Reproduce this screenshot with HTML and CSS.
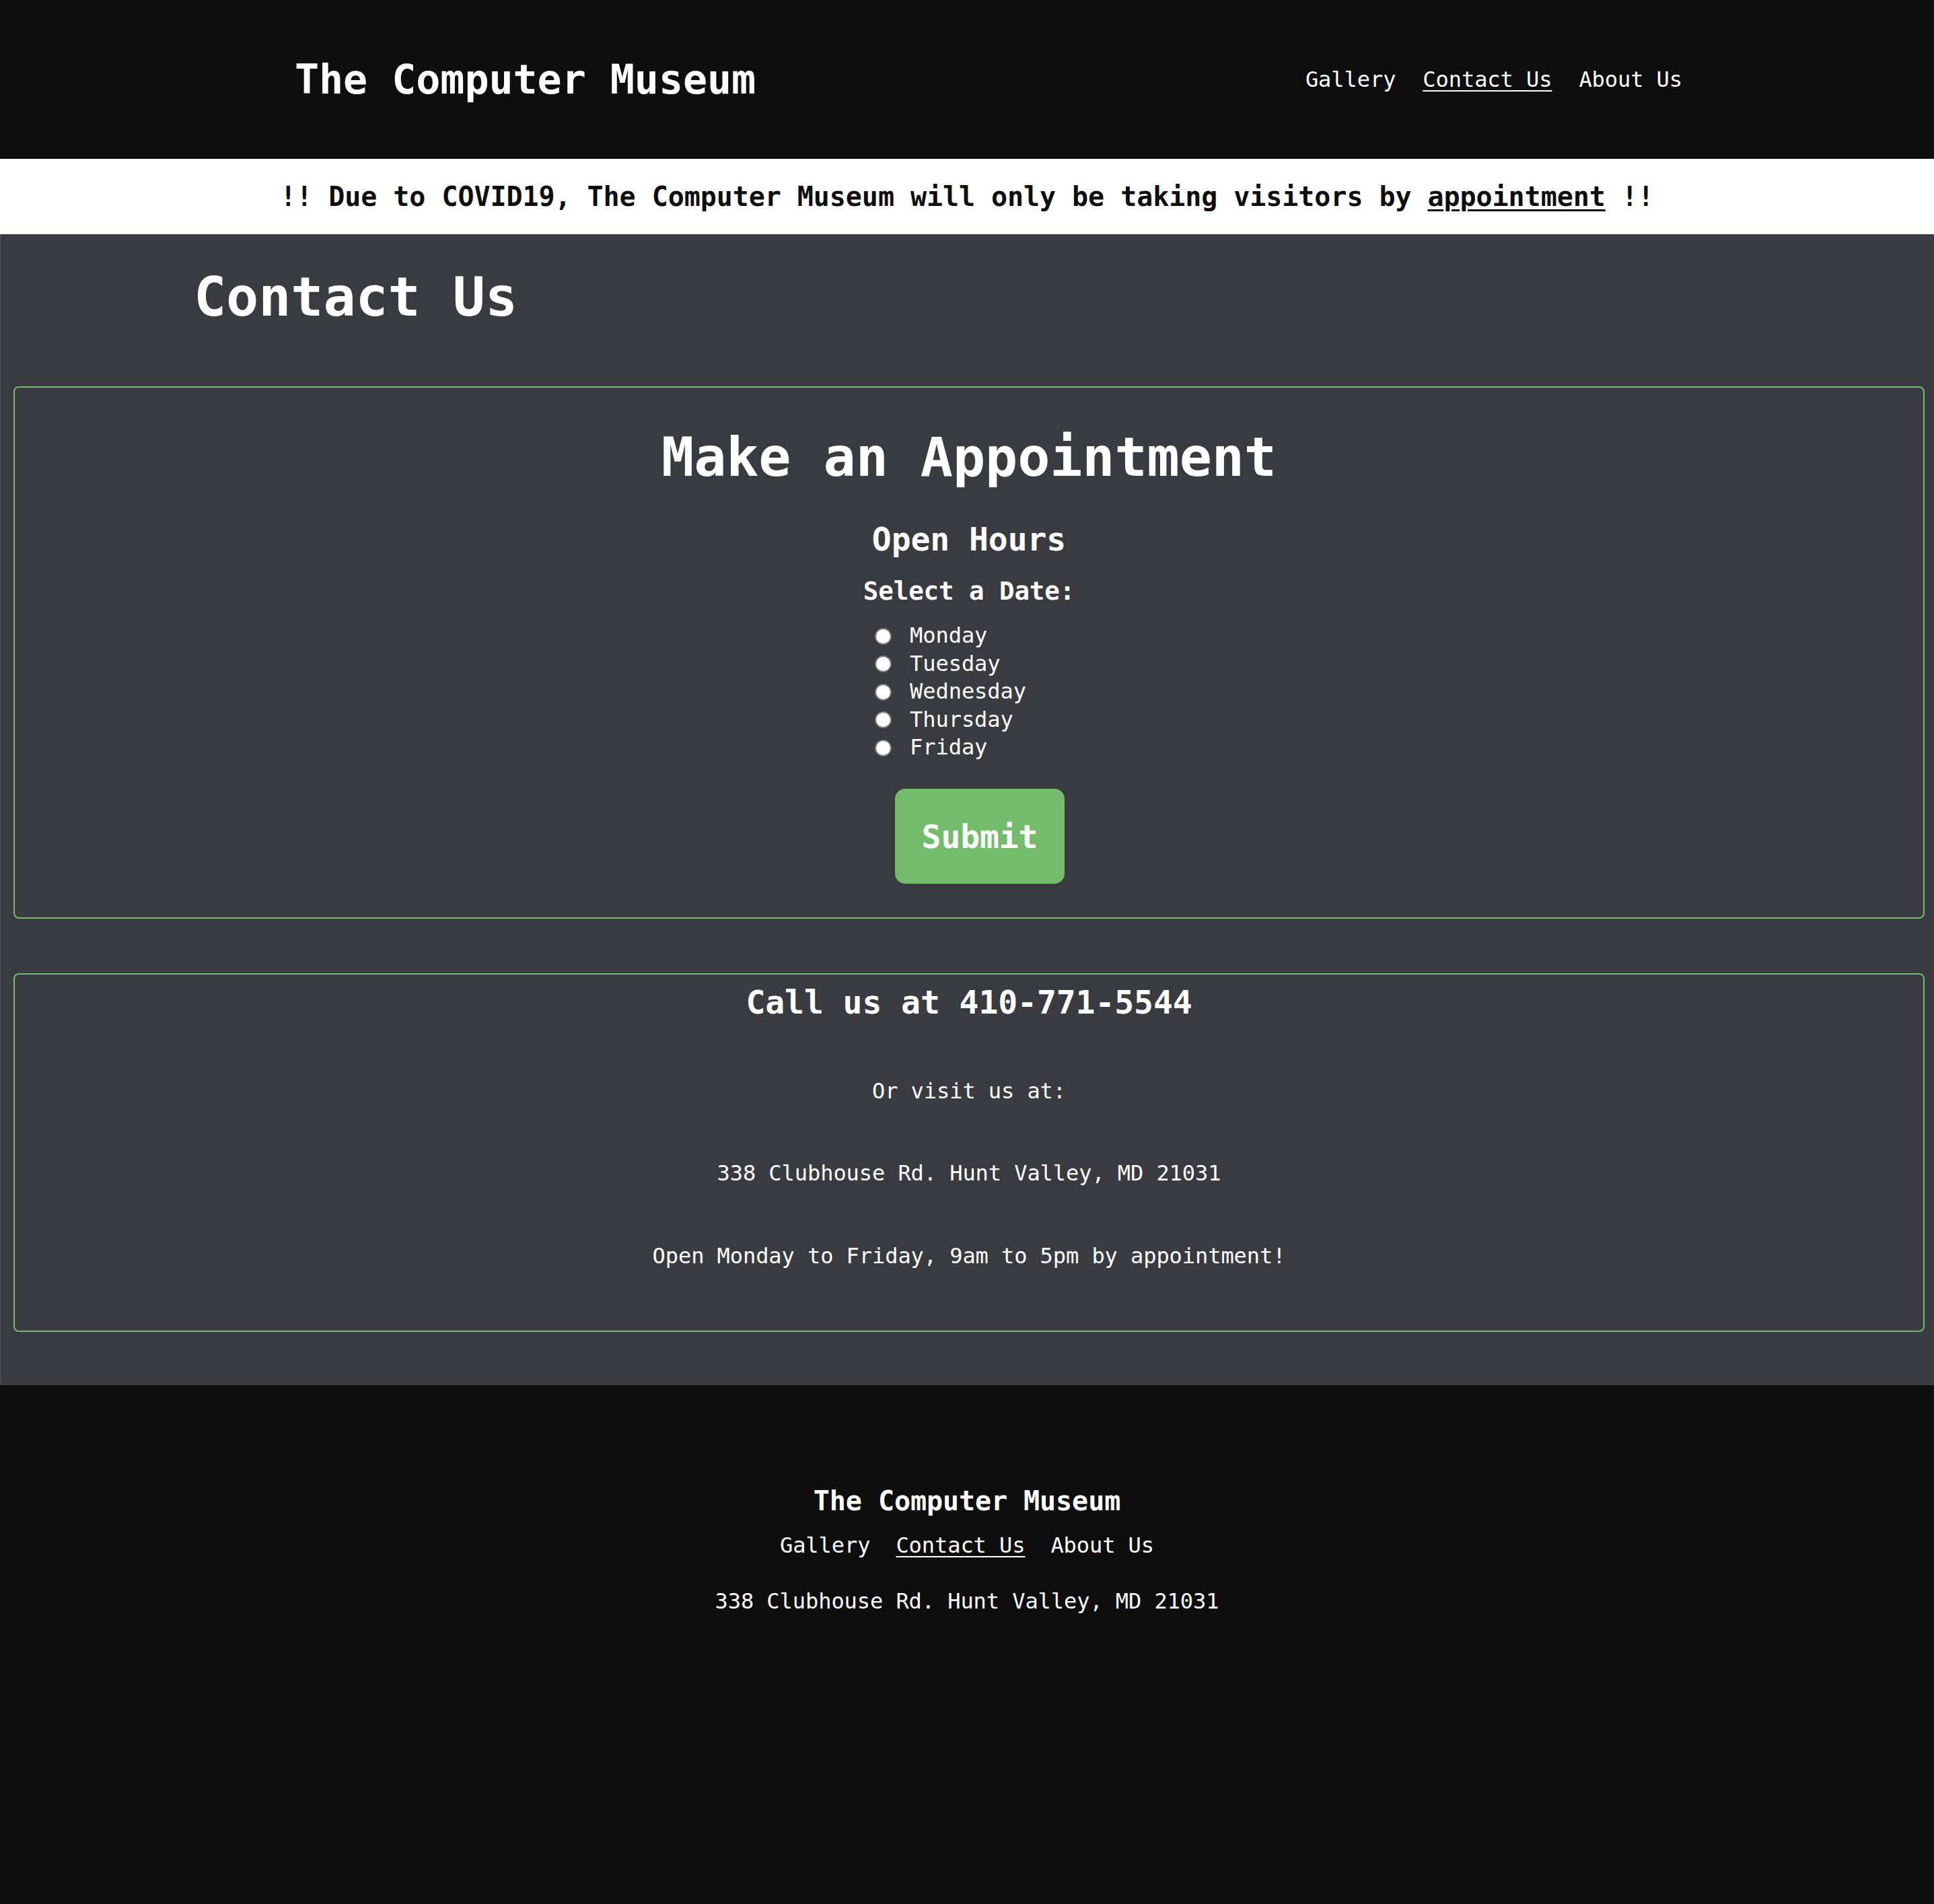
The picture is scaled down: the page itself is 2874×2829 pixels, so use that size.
FILE: index.html
```html
<!DOCTYPE html>
<html lang="en">
<head>
<meta charset="utf-8">
<title>Contact Us - The Computer Museum</title>
<link rel="stylesheet" href="styles.css">
</head>
<body>
<header class="site-header">
  <div class="brand">The Computer Museum</div>
  <nav class="nav">
    <a href="#">Gallery</a>
    <a href="#" class="active">Contact Us</a>
    <a href="#">About Us</a>
  </nav>
</header>
<div class="notice">!! Due to COVID19, The Computer Museum will only be taking visitors by&nbsp;<a href="#">appointment</a>&nbsp;!!</div>
<main class="main">
  <h1 class="page-title">Contact Us</h1>
  <section class="card card-appt">
    <h2 class="appt-title">Make an Appointment</h2>
    <h3 class="hours-title">Open Hours</h3>
    <h4 class="date-title">Select a Date:</h4>
    <form class="appt-form">
      <div class="radios">
        <label class="radio"><input type="radio" name="day"><span>Monday</span></label>
        <label class="radio"><input type="radio" name="day"><span>Tuesday</span></label>
        <label class="radio"><input type="radio" name="day"><span>Wednesday</span></label>
        <label class="radio"><input type="radio" name="day"><span>Thursday</span></label>
        <label class="radio"><input type="radio" name="day"><span>Friday</span></label>
      </div>
      <button type="button" class="submit">Submit</button>
    </form>
  </section>
  <section class="card card-call">
    <h2 class="call-title">Call us at 410-771-5544</h2>
    <p class="info">Or visit us at:</p>
    <p class="info">338 Clubhouse Rd. Hunt Valley, MD 21031</p>
    <p class="info">Open Monday to Friday, 9am to 5pm by appointment!</p>
  </section>
</main>
<footer class="site-footer">
  <div class="footer-brand">The Computer Museum</div>
  <nav class="footer-nav">
    <a href="#">Gallery</a>
    <a href="#" class="active">Contact Us</a>
    <a href="#">About Us</a>
  </nav>
  <p class="footer-address">338 Clubhouse Rd. Hunt Valley, MD 21031</p>
</footer>
</body>
</html>
```
FILE: styles.css
```css
html {
  background: #0e0e0f;
}
body {
  margin: 0;
  background: #0e0e0f;
  color: #ffffff;
  font-family: "DejaVu Sans Mono", "Liberation Mono", monospace;
  font-size: 32px;
  line-height: 1.2;
  letter-spacing: -0.002em;
}
a {
  color: inherit;
  text-decoration: none;
}
a.active {
  text-decoration: underline;
  text-decoration-thickness: 2px;
  text-underline-offset: 5px;
}

/* Header */
.site-header {
  height: 236px;
  box-sizing: border-box;
  display: flex;
  align-items: center;
  justify-content: space-between;
  padding: 0 374px 0 438px;
  background: #0e0e0f;
}
.brand {
  font-size: 60px;
  font-weight: bold;
  line-height: 72px;
}
.nav {
  display: flex;
  gap: 40px;
  font-size: 32px;
  line-height: 38.4px;
}

/* Notice */
.notice {
  height: 112px;
  background: #ffffff;
  color: #0e0e0f;
  display: flex;
  align-items: center;
  justify-content: center;
  font-size: 40px;
  font-weight: bold;
  line-height: 48px;
  white-space: nowrap;
}
.notice a {
  text-decoration: underline;
  text-decoration-thickness: 3px;
  text-underline-offset: 5px;
}

/* Main */
.main {
  background: #3a3b40;
  border-left: 1px solid #55565b;
  padding: 46px 14px 79px 19px;
}
.page-title {
  margin: 0 0 84px;
  padding-left: 268px;
  font-size: 80px;
  line-height: 96px;
  font-weight: bold;
}
.card {
  border: 2px solid #73bd6d;
  border-radius: 8px;
  display: flex;
  flex-direction: column;
  align-items: center;
  text-align: center;
}
.card h2, .card h3, .card h4, .card p {
  margin: 0;
  font-weight: bold;
}
.card-appt {
  padding: 56px 0 50px;
}
.appt-title {
  font-size: 80px;
  line-height: 96px;
  margin-bottom: 45px !important;
}
.hours-title {
  font-size: 48px;
  line-height: 57.6px;
  margin-bottom: 25.4px !important;
}
.date-title {
  font-size: 37.44px;
  line-height: 44.9px;
  margin-bottom: 23.4px !important;
}
.appt-form {
  display: flex;
  flex-direction: column;
  align-items: center;
}
.radios {
  display: flex;
  flex-direction: column;
  align-items: flex-start;
  margin: 0 55px 40.6px 0;
}
.radio {
  display: flex;
  align-items: center;
  gap: 27px;
  font-size: 32px;
  line-height: 41.5px;
}
.radio input {
  appearance: none;
  -webkit-appearance: none;
  margin: 0;
  width: 25px;
  height: 25px;
  border-radius: 50%;
  background: #ffffff;
  border: 2px solid #7a7a7a;
  box-sizing: border-box;
}
.submit {
  margin-left: 32px;
  width: 252px;
  height: 141px;
  border: none;
  border-radius: 15px;
  background: #74bc6c;
  color: #ffffff;
  font-family: inherit;
  font-size: 48px;
  font-weight: bold;
  letter-spacing: -0.002em;
  padding: 0;
}
.card-call {
  margin-top: 81px;
  padding: 12.6px 0 91.5px;
}
.call-title {
  font-size: 48px;
  line-height: 57.6px;
  margin-bottom: 83.5px !important;
}
.card .info {
  font-weight: normal;
  font-size: 32px;
  line-height: 38.4px;
  margin-bottom: 84px;
}
.card .info:last-child {
  margin-bottom: 0;
}

/* Footer */
.site-footer {
  background: #0e0e0f;
  padding-top: 148px;
  padding-bottom: 200px;
  display: flex;
  flex-direction: column;
  align-items: center;
}
.footer-brand {
  font-size: 40px;
  font-weight: bold;
  line-height: 48px;
}
.footer-nav {
  margin-top: 23.5px;
  display: flex;
  gap: 38px;
  line-height: 38.4px;
}
.footer-address {
  margin: 44px 0 0;
  line-height: 38.4px;
}
```
